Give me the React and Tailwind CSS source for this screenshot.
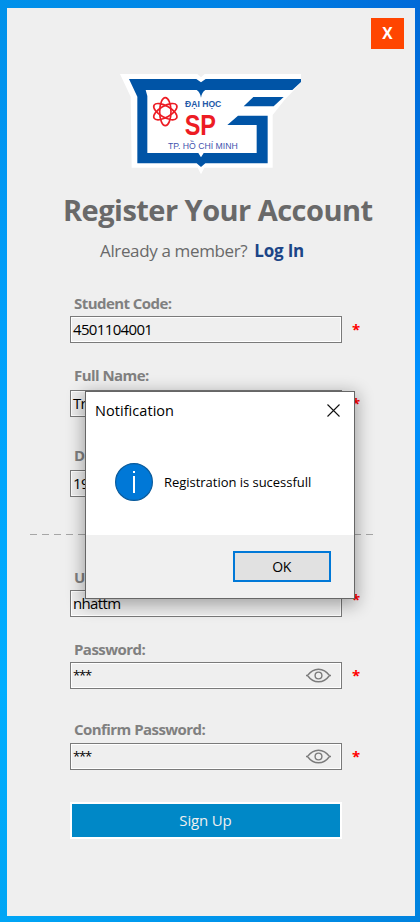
import React from "react";

const INK = "font-['Open_Sans','Noto_Sans',sans-serif]";

function Logo() {
  return (
    <svg className="block h-[120px] w-[200px]" viewBox="0 0 600 360">
      <path fill="#fff" d="M30 42H262L273 52L284 42H573V68L524 119L488 165V323H283L273 343L263 323H65L62 110Z" />
      <path
        fill="#0054a6"
        d="M57 57H259L273 67L287 57H573V66L547 90H286C279 94 275 102 273 113C271 102 267 94 260 90H107L112 108V279H265L273 292L281 279H440V195H352L384 167H473V310H286L273 321L260 310H82V110Z"
      />
      <path fill="#0054a6" d="M430 111H521L491 139H401Z" />
      <g fill="none" stroke="#ed1c24" strokeWidth="5">
        <ellipse cx="166" cy="155" rx="17" ry="42" />
        <ellipse cx="166" cy="155" rx="17" ry="39" transform="rotate(60 166 155)" />
        <ellipse cx="166" cy="155" rx="17" ry="39" transform="rotate(120 166 155)" />
      </g>
      <g fontFamily="Liberation Sans, sans-serif">
        <text x="225" y="142" fontSize="29" fontWeight="700" fill="#2458a8" textLength="109" lengthAdjust="spacingAndGlyphs">ĐẠI HỌC</text>
        <text x="224" y="225" fontSize="87" fontWeight="700" fill="#ed1c24" textLength="94" lengthAdjust="spacingAndGlyphs">SP</text>
        <text x="174" y="266" fontSize="29" fill="#4253ae" textLength="209" lengthAdjust="spacingAndGlyphs">TP. HỒ CHÍ MINH</text>
      </g>
    </svg>
  );
}

function Eye() {
  return (
    <svg className="mr-[9px] h-[15px] w-[27px]" viewBox="0 0 27 15" fill="none" stroke="#7b7b7b" strokeWidth="1.4">
      <path d="M1 7.5H2.5C5 4 9 1.2 13.5 1.2S22 4 24.5 7.5H26M2.5 7.5C5 11 9 13.8 13.5 13.8S22 11 24.5 7.5" />
      <circle cx="13.5" cy="7.5" r="3.4" />
    </svg>
  );
}

function Field({ label, value, valueClass = "tracking-[-0.65px]", starClass = "mb-[6px]", gap = "", margin, eye, star = true }) {
  return (
    <div className={`ml-[63px] ${margin}`}>
      <div className={`flex h-6 items-center pb-[2px] pl-1 text-[15px] font-bold leading-[22px] tracking-[-0.55px] text-[#808080] ${gap}`}>
        <span className="whitespace-nowrap">{label}</span>
      </div>
      <div className="flex h-[27px] items-center">
        <div className="flex h-[27px] w-[272px] items-center justify-between border border-[#7a7a7a] bg-[#efefef] pl-[2px] text-[15px] leading-[25px] text-black shadow-[inset_0_0_0_1px_#fff]">
          <span className={`whitespace-nowrap ${valueClass}`}>{value}</span>
          {eye && <Eye />}
        </div>
        {star && <span className={`ml-[10px] h-[19px] text-[15px] font-bold leading-[24px] text-[#f00] ${starClass}`}>*</span>}
      </div>
    </div>
  );
}

function Dialog() {
  return (
    <div className="absolute left-[85px] top-[391px] flex h-[208px] w-[270px] flex-col border border-[#666] bg-white shadow-[0_4px_16px_2px_rgba(0,0,0,0.32)]">
      <div className="flex h-[38px] items-center justify-between pb-px pl-[9px] pr-[14px]">
        <span className="text-[14.5px] tracking-[0.05px] text-black">Notification</span>
        <svg className="h-[13px] w-[13px]" viewBox="0 0 13 13" stroke="#111" strokeWidth="1.1">
          <path d="M0.5 0.5L12.5 12.5M12.5 0.5L0.5 12.5" />
        </svg>
      </div>
      <div className="flex h-[105px] items-center pb-[1px] pl-[29px]">
        <svg className="h-[38px] w-[38px] shrink-0" viewBox="0 0 38 38">
          <circle cx="19" cy="19" r="18.4" fill="#0078d7" stroke="#0a5b9c" strokeWidth="1.2" />
          <rect x="18" y="8" width="2" height="2" fill="#fff" />
          <rect x="18" y="13" width="2" height="17" fill="#fff" />
        </svg>
        <span className="ml-[11px] mt-[2px] whitespace-nowrap text-[13px] tracking-[-0.03px] text-black">Registration is sucessfull</span>
      </div>
      <div className="flex flex-1 justify-end bg-[#f0f0f0] pr-[23px] pt-[16px]">
        <div className="flex h-[31px] w-[98px] items-center justify-center border-2 border-[#0078d7] bg-[#e1e1e1] pr-px text-[14px] tracking-[-0.5px] text-black">OK</div>
      </div>
    </div>
  );
}

export default function App() {
  return (
    <div className={`relative flex h-[922px] w-[420px] flex-col overflow-hidden bg-[#0090ee] ${INK}`}>
      <div className="h-2 shrink-0 bg-[linear-gradient(90deg,#0091ea,#0080e4_60%,#006ad8)]" />
      <div className="flex h-[908px] shrink-0">
        <div className="w-[7px] bg-[linear-gradient(180deg,#0091ea,#0094f0_12%,#00a0fa_35%,#00aeff_75%,#00a5f4)]" />
        <div className="h-[908px] w-[408px] bg-[#efefef]">
          <div className="flex h-[52px] justify-end pr-[11px] pt-[10px]">
            <div className="flex h-[31px] w-[33px] items-center justify-center bg-[#ff4500] text-[15.5px] font-bold text-white">X</div>
          </div>
          <div className="ml-[103px]"><Logo /></div>
          <h1 className="ml-[56px] mt-[9px] h-[43px] whitespace-nowrap text-[29px] font-bold leading-[42px] tracking-[-0.53px] text-[#696969]">Register Your Account</h1>
          <p className="ml-[93px] mt-[7px] flex h-6 items-center whitespace-nowrap text-[17px] leading-6 text-[#696969]">
            <span className="tracking-[-0.36px]">Already a member?</span>
            <span className="ml-[7px] font-bold tracking-[-0.2px] text-[#1c4587]">Log In</span>
          </p>
          <Field margin="mt-[29px]" label="Student Code:" value="4501104001" />
          <Field margin="mt-[21px]" gap="mb-[2px]" label="Full Name:" value="Tri" />
          <Field margin="mt-[27px]" gap="mb-[2px]" label="Date" value="19" star={false} />
          <svg className="ml-[23px] mt-[36px] block h-[2px] w-[344px]" viewBox="0 0 344 2">
            <path d="M0 1.5H344" stroke="#a6a6a6" strokeWidth="1" strokeDasharray="7 5" />
          </svg>
          <Field margin="mt-[31px]" label="User" value="nhattm" starClass="mb-[14px]" />
          <Field margin="mt-[21px]" label="Password:" value="***" valueClass="text-[13px] tracking-[-1.2px]" eye />
          <Field margin="mt-[29px]" gap="mb-[1px]" label="Confirm Password:" value="***" valueClass="text-[13px] tracking-[-1.2px]" eye />
          <div className="ml-[63px] mt-8 flex h-[37px] w-[272px] items-center justify-center border-2 border-white bg-[#0088c7] pr-px text-[15px] tracking-[-0.15px] text-[#efefef]">Sign Up</div>
        </div>
        <div className="w-[5px] bg-[linear-gradient(180deg,#006ad8,#0074e2_20%,#0086f4_27%,#0092ff_42%,#0088ee_57%,#0098ff_69%,#0084e2_85%,#0083df)]" />
      </div>
      <div className="h-[6px] shrink-0 bg-[linear-gradient(90deg,#00a6f6,#0095ec_50%,#0082de)]" />
      <Dialog />
    </div>
  );
}
